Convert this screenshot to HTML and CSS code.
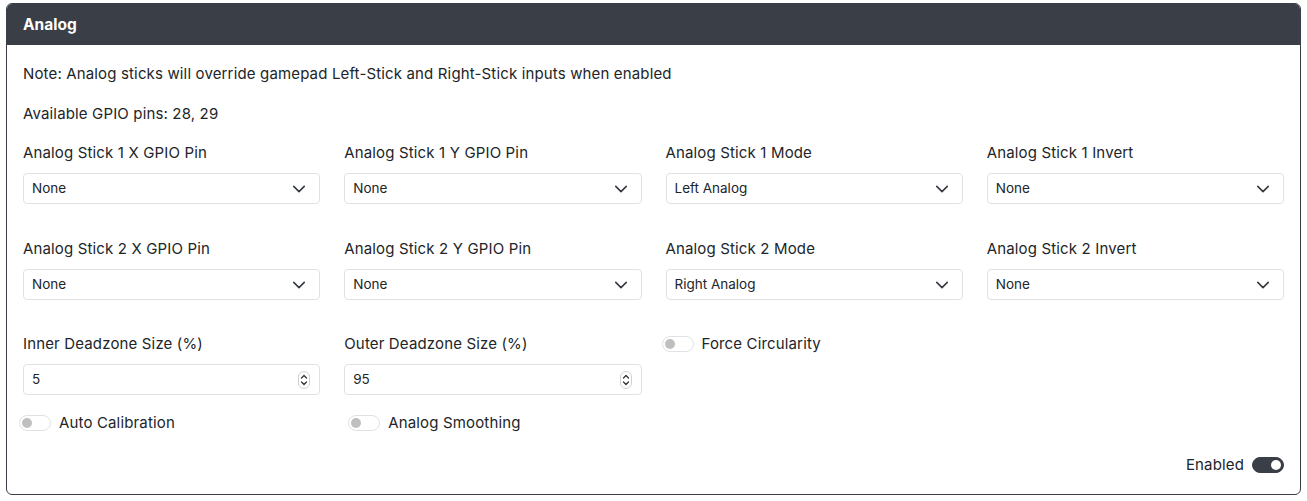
FILE: index.html
```html
<!DOCTYPE html>
<html>
<head>
<meta charset="utf-8">
<link rel="stylesheet" href="styles.css">
</head>
<body>
<div class="card">
  <div class="card-header">Analog</div>
  <div class="card-body">
    <p class="note">Note: Analog sticks will override gamepad Left-Stick and Right-Stick inputs when enabled</p>
    <p class="note note-last">Available GPIO pins: 28, 29</p>
    <div class="grid grid-first">
      <div class="field"><label>Analog Stick 1 X GPIO Pin</label><div class="select">None<svg class="chev" viewBox="0 0 16 16"><path d="m2 5 6 6 6-6"/></svg></div></div>
      <div class="field"><label>Analog Stick 1 Y GPIO Pin</label><div class="select">None<svg class="chev" viewBox="0 0 16 16"><path d="m2 5 6 6 6-6"/></svg></div></div>
      <div class="field"><label>Analog Stick 1 Mode</label><div class="select">Left Analog<svg class="chev" viewBox="0 0 16 16"><path d="m2 5 6 6 6-6"/></svg></div></div>
      <div class="field"><label>Analog Stick 1 Invert</label><div class="select">None<svg class="chev" viewBox="0 0 16 16"><path d="m2 5 6 6 6-6"/></svg></div></div>
    </div>
    <div class="grid">
      <div class="field"><label>Analog Stick 2 X GPIO Pin</label><div class="select">None<svg class="chev" viewBox="0 0 16 16"><path d="m2 5 6 6 6-6"/></svg></div></div>
      <div class="field"><label>Analog Stick 2 Y GPIO Pin</label><div class="select">None<svg class="chev" viewBox="0 0 16 16"><path d="m2 5 6 6 6-6"/></svg></div></div>
      <div class="field"><label>Analog Stick 2 Mode</label><div class="select">Right Analog<svg class="chev" viewBox="0 0 16 16"><path d="m2 5 6 6 6-6"/></svg></div></div>
      <div class="field"><label>Analog Stick 2 Invert</label><div class="select">None<svg class="chev" viewBox="0 0 16 16"><path d="m2 5 6 6 6-6"/></svg></div></div>
    </div>
    <div class="grid grid-tight">
      <div class="field"><label>Inner Deadzone Size (%)</label><div class="select">5<svg class="spin" viewBox="0 0 12 18"><rect x="0.5" y="0.5" width="11" height="17" rx="5.5"/><path d="M3.5 7 6 4.5 8.5 7M3.5 11 6 13.5 8.5 11"/></svg></div></div>
      <div class="field"><label>Outer Deadzone Size (%)</label><div class="select">95<svg class="spin" viewBox="0 0 12 18"><rect x="0.5" y="0.5" width="11" height="17" rx="5.5"/><path d="M3.5 7 6 4.5 8.5 7M3.5 11 6 13.5 8.5 11"/></svg></div></div>
      <div class="field"><div class="switch shift-left"><span class="toggle"></span>Force Circularity</div></div>
      <div class="field"></div>
    </div>
    <div class="grid grid-tight">
      <div class="field"><div class="switch shift-left"><span class="toggle"></span>Auto Calibration</div></div>
      <div class="field"><div class="switch shift-right"><span class="toggle"></span>Analog Smoothing</div></div>
      <div class="field"></div>
      <div class="field"></div>
    </div>
    <div class="footer-row"><div class="switch"><span>Enabled</span><span class="toggle on"></span></div></div>
  </div>
</div>
</body>
</html>
```
FILE: styles.css
```css
* { box-sizing: border-box; }
html, body { margin: 0; padding: 0; background: #fff; }
body {
  font-family: Inter, "Noto Sans", "Liberation Sans", sans-serif;
  font-size: 16px;
  line-height: 24px;
  color: #212529;
  padding: 3px 6px 0 6px;
}
.card {
  border: 1px solid #3a3e46;
  border-radius: 6px;
  overflow: hidden;
  height: 492px;
}
.card-header {
  background: #3a3e46;
  color: #fff;
  font-weight: 700;
  font-size: 15.5px;
  height: 41px;
  line-height: 41px;
  padding: 0 16px;
}
.card-body {
  padding: 17px 16px 0 16px;
}
.note {
  margin: 0 0 16px 0;
  font-size: 15px;
  letter-spacing: 0.15px;
}
.note-last { margin-bottom: 15px; }
.grid {
  display: grid;
  grid-template-columns: repeat(4, 1fr);
  column-gap: 24px;
  margin-bottom: 32px;
}
.grid-first { margin-bottom: 33px; }
.grid-tight { margin-bottom: 16px; }
.field label {
  display: block;
  font-size: 15px;
  letter-spacing: 0.15px;
  margin-bottom: 8px;
}
.select {
  height: 31px;
  border: 1px solid #dee2e6;
  border-radius: 4px;
  font-size: 13.5px;
  line-height: 29px;
  padding: 0 8px;
  display: flex;
  align-items: center;
  justify-content: space-between;
}
.chev {
  width: 14px;
  height: 14px;
  margin-right: 5px;
  fill: none;
  stroke: #343a40;
  stroke-width: 1.8;
  stroke-linecap: round;
  stroke-linejoin: round;
}
.spin {
  width: 12px;
  height: 18px;
  margin-right: 1px;
  fill: none;
}
.spin rect { stroke: #d0d0d0; stroke-width: 1; }
.spin path { stroke: #333; stroke-width: 1.3; stroke-linecap: round; stroke-linejoin: round; }
.switch {
  display: flex;
  align-items: center;
  gap: 8px;
  font-size: 15px;
  letter-spacing: 0.15px;
  height: 24px;
}
.shift-left { margin-left: -4px; }
.shift-right { margin-left: 4px; }
.toggle {
  width: 32px;
  height: 16px;
  border: 1px solid #dee2e6;
  border-radius: 8px;
  position: relative;
  flex: none;
}
.toggle::after {
  content: "";
  position: absolute;
  left: 2px;
  top: 2px;
  width: 10px;
  height: 10px;
  border-radius: 50%;
  background: #bfbfbf;
}
.toggle.on {
  background: #3a3e46;
  border-color: #3a3e46;
}
.toggle.on::after {
  left: auto;
  right: 2px;
  background: #fff;
}
.footer-row {
  display: flex;
  justify-content: flex-end;
  margin-top: 18px;
}
```
